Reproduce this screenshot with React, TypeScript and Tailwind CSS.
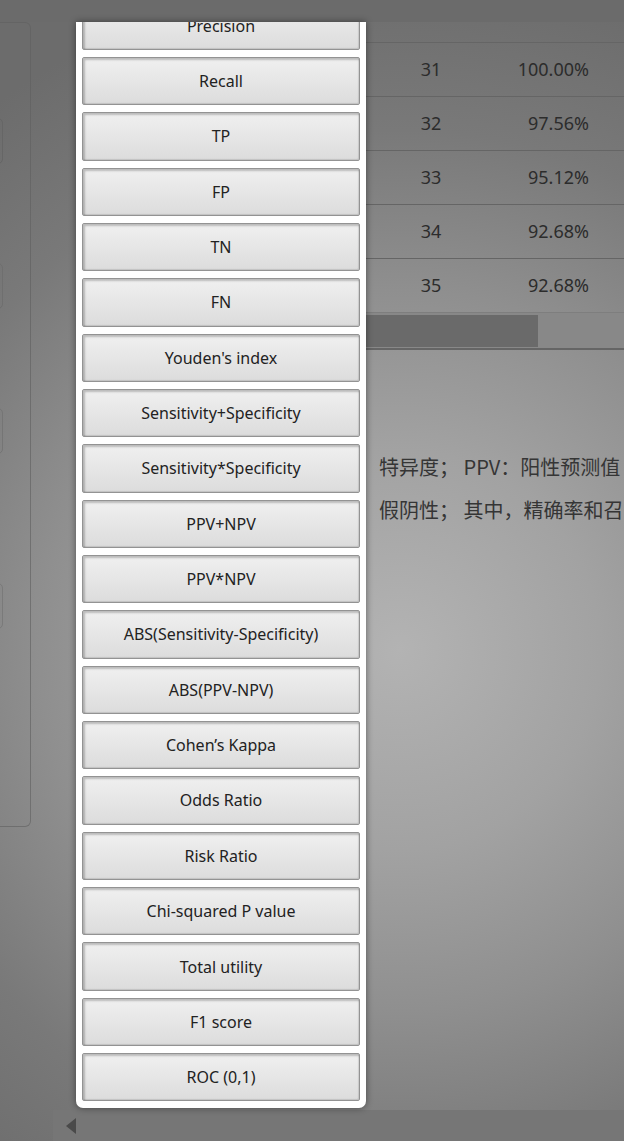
import React from "react";

const items = [
  "Precision",
  "Recall",
  "TP",
  "FP",
  "TN",
  "FN",
  "Youden's index",
  "Sensitivity+Specificity",
  "Sensitivity*Specificity",
  "PPV+NPV",
  "PPV*NPV",
  "ABS(Sensitivity-Specificity)",
  "ABS(PPV-NPV)",
  "Cohen’s Kappa",
  "Odds Ratio",
  "Risk Ratio",
  "Chi-squared P value",
  "Total utility",
  "F1 score",
  "ROC (0,1)",
];

const rows = [
  ["31", "100.00%"],
  ["32", "97.56%"],
  ["33", "95.12%"],
  ["34", "92.68%"],
  ["35", "92.68%"],
];

export default function App() {
  return (
    <div className="w-[624px] h-[1141px] overflow-hidden flex flex-col font-['Noto_Sans','Noto_Sans_CJK_SC',sans-serif] bg-[radial-gradient(circle_at_400px_650px,#b3b3b3_0px,#a2a2a2_200px,#8f8f8f_360px,#797979_520px,#6c6c6c_680px)]">
      <div className="h-[22px] shrink-0 bg-[#6b6b6b]" />
      <div className="flex h-[1088px] shrink-0">
        {/* left card */}
        <div className="w-[31px] h-[805px] shrink-0 rounded-r-[6px] border border-l-0 border-[#5f5f5f]/60 flex flex-col">
          <div className="mt-[95px] h-[46px] w-[20px] -ml-[17px] rounded-[5px] border border-[#666]" />
          <div className="mt-[99px] h-[46px] w-[20px] -ml-[17px] rounded-[5px] border border-[#6f6f6f]" />
          <div className="mt-[99px] h-[46px] w-[20px] -ml-[17px] rounded-[5px] border border-[#757575]" />
          <div className="mt-[129px] h-[46px] w-[20px] -ml-[17px] rounded-[5px] border border-[#7a7a7a]" />
        </div>
        {/* popup panel */}
        <div className="ml-[45px] w-[290px] h-[1086px] shrink-0 bg-white rounded-b-[7px] overflow-hidden relative z-[1] shadow-[0_0_7px_rgba(0,0,0,0.45)]">
          <div className="flex flex-col gap-[7px] px-[6px] -mt-[20.5px]">
            {items.map((t) => (
              <div
                key={t}
                className="h-[48.35px] shrink-0 flex items-center justify-center rounded-[2px] border border-[#939393] bg-gradient-to-b from-[#f0f0f0] to-[#dcdcdc] shadow-[inset_2px_2px_2px_rgba(0,0,0,0.22),inset_-1px_-1px_1px_rgba(0,0,0,0.12)] text-[16px] text-[#222]"
              >
                {t}
              </div>
            ))}
          </div>
        </div>
        {/* right content */}
        <div className="flex-1 min-w-0 overflow-hidden flex flex-col">
          <div className="h-[20px] shrink-0" />
          {rows.map(([n, p]) => (
            <div
              key={n}
              className="h-[54px] shrink-0 border-t border-[#656565] flex items-center text-[18px] text-[#2c2c2c]"
            >
              <div className="w-[130px] text-center">{n}</div>
              <div className="w-[93px] text-right">{p}</div>
            </div>
          ))}
          <div className="h-[36px] shrink-0 border-t border-[#7e7e7e] bg-[#888] flex items-center">
            <div className="h-[32px] w-[172px] bg-[#6a6a6a]" />
          </div>
          <div className="h-[2px] shrink-0 bg-[#656565]" />
          <div className="mt-[95px] pl-[13px] whitespace-nowrap text-[20px] leading-[43px] text-[#353535] font-['Noto_Sans_CJK_SC',sans-serif]">
            <div>特异度； PPV：阳性预测值</div>
            <div>假阴性； 其中，精确率和召</div>
          </div>
        </div>
      </div>
      <div className="h-[31px] ml-[53px] shrink-0 bg-[#767676] flex items-center pl-[13px]">
        <div className="w-0 h-0 border-y-[8px] border-y-transparent border-r-[10px] border-r-[#4a4a4a]" />
      </div>
    </div>
  );
}
